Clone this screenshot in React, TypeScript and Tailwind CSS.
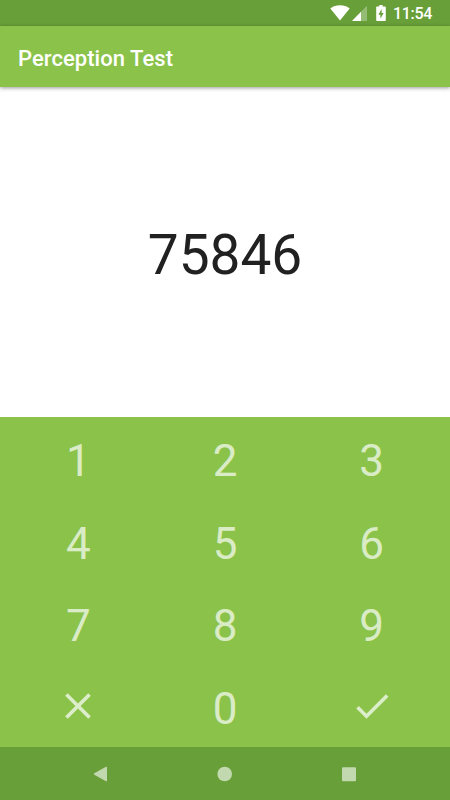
const keys = ["1", "2", "3", "4", "5", "6", "7", "8", "9", "clear", "0", "done"];

function StatusBar() {
  return (
    <div className="flex h-[26px] shrink-0 items-center justify-end bg-[#689f38] pr-[17px] text-white">
      <svg width="20" height="16" viewBox="0 0 20 16" fill="currentColor" className="mr-[2px]">
        <path d="M10 15.600 0.300 3.500C3 1.300 6.300 0.200 10 0.200s7 1.100 9.700 3.300z" />
      </svg>
      <svg width="15" height="16" viewBox="0 0 15 16" fill="currentColor" className="mr-[9px]">
        <path d="M0 16 15 .8V16z" opacity=".3" />
        <path d="M0 16 9 6.800V16z" />
      </svg>
      <svg width="10" height="16" viewBox="0 0 10 16" className="mr-[7px]">
        <path d="M3.300 0h3.400v1.500H9q.8 0 .8.800V15.200q0 .8-.8.800H1q-.8 0-.8-.8V2.300q0-.8.8-.8h2.300z" fill="currentColor" />
        <path d="M5.600 4v4h2L4.400 13.800V9.800H2.400z" fill="#689f38" />
      </svg>
      <span className="w-[40px] pt-[2px] text-[16px] leading-none font-medium tracking-[-0.3px]">11:54</span>
    </div>
  );
}

function KeyLabel({ name }: { name: string }) {
  if (name === "clear") {
    return (
      <svg width="44" height="44" viewBox="0 0 24 24" fill="currentColor">
        <path d="M19 6.410 17.590 5 12 10.590 6.410 5 5 6.410 10.590 12 5 17.590 6.410 19 12 13.410 17.590 19 19 17.590 13.410 12z" />
      </svg>
    );
  }
  if (name === "done") {
    return (
      <svg width="44" height="44" viewBox="0 0 24 24" fill="currentColor">
        <path d="M9 16.170 4.830 12l-1.420 1.410L9 19 21 7l-1.410-1.410z" />
      </svg>
    );
  }
  return <span className="pt-[6px]">{name}</span>;
}

export default function App() {
  return (
    <div className="flex h-[800px] w-[450px] flex-col overflow-hidden bg-white font-['Roboto',sans-serif]">
      <StatusBar />
      <header className="z-10 flex h-[61px] shrink-0 items-center bg-[#8bc34a] px-[18px] pt-[3px] text-[22px] font-medium tracking-[0.05px] text-white shadow-[0_1px_4px_rgba(0,0,0,0.4)]">
        <h1>Perception Test</h1>
      </header>

      <main className="flex min-h-0 flex-1 items-center justify-center pt-[7px] text-[55px] text-[#212121]">
        75846
      </main>

      {/* Keypad */}
      <div className="grid h-[330px] shrink-0 grid-cols-3 grid-rows-4 bg-[#8bc34a] px-[5px] text-[44px] leading-none text-white/70">
        {keys.map((key) => (
          <button key={key} className="flex items-center justify-center">
            <KeyLabel name={key} />
          </button>
        ))}
      </div>

      {/* Navigation bar */}
      <nav className="flex h-[53px] shrink-0 items-center bg-[#689f38] px-[38px] text-white/60">
        <svg width="374" height="20" viewBox="0 0 374 20" fill="currentColor">
          <path d="M56.300 9.300 68 2.800q1-.4 1 .6v13.200q0 1-1 .6L56.300 10.700q-1-.7 0-1.400z" />
          <circle cx="186.700" cy="10" r="7.300" />
          <rect x="304" y="3.300" width="14" height="14" rx="1" />
        </svg>
      </nav>
    </div>
  );
}
